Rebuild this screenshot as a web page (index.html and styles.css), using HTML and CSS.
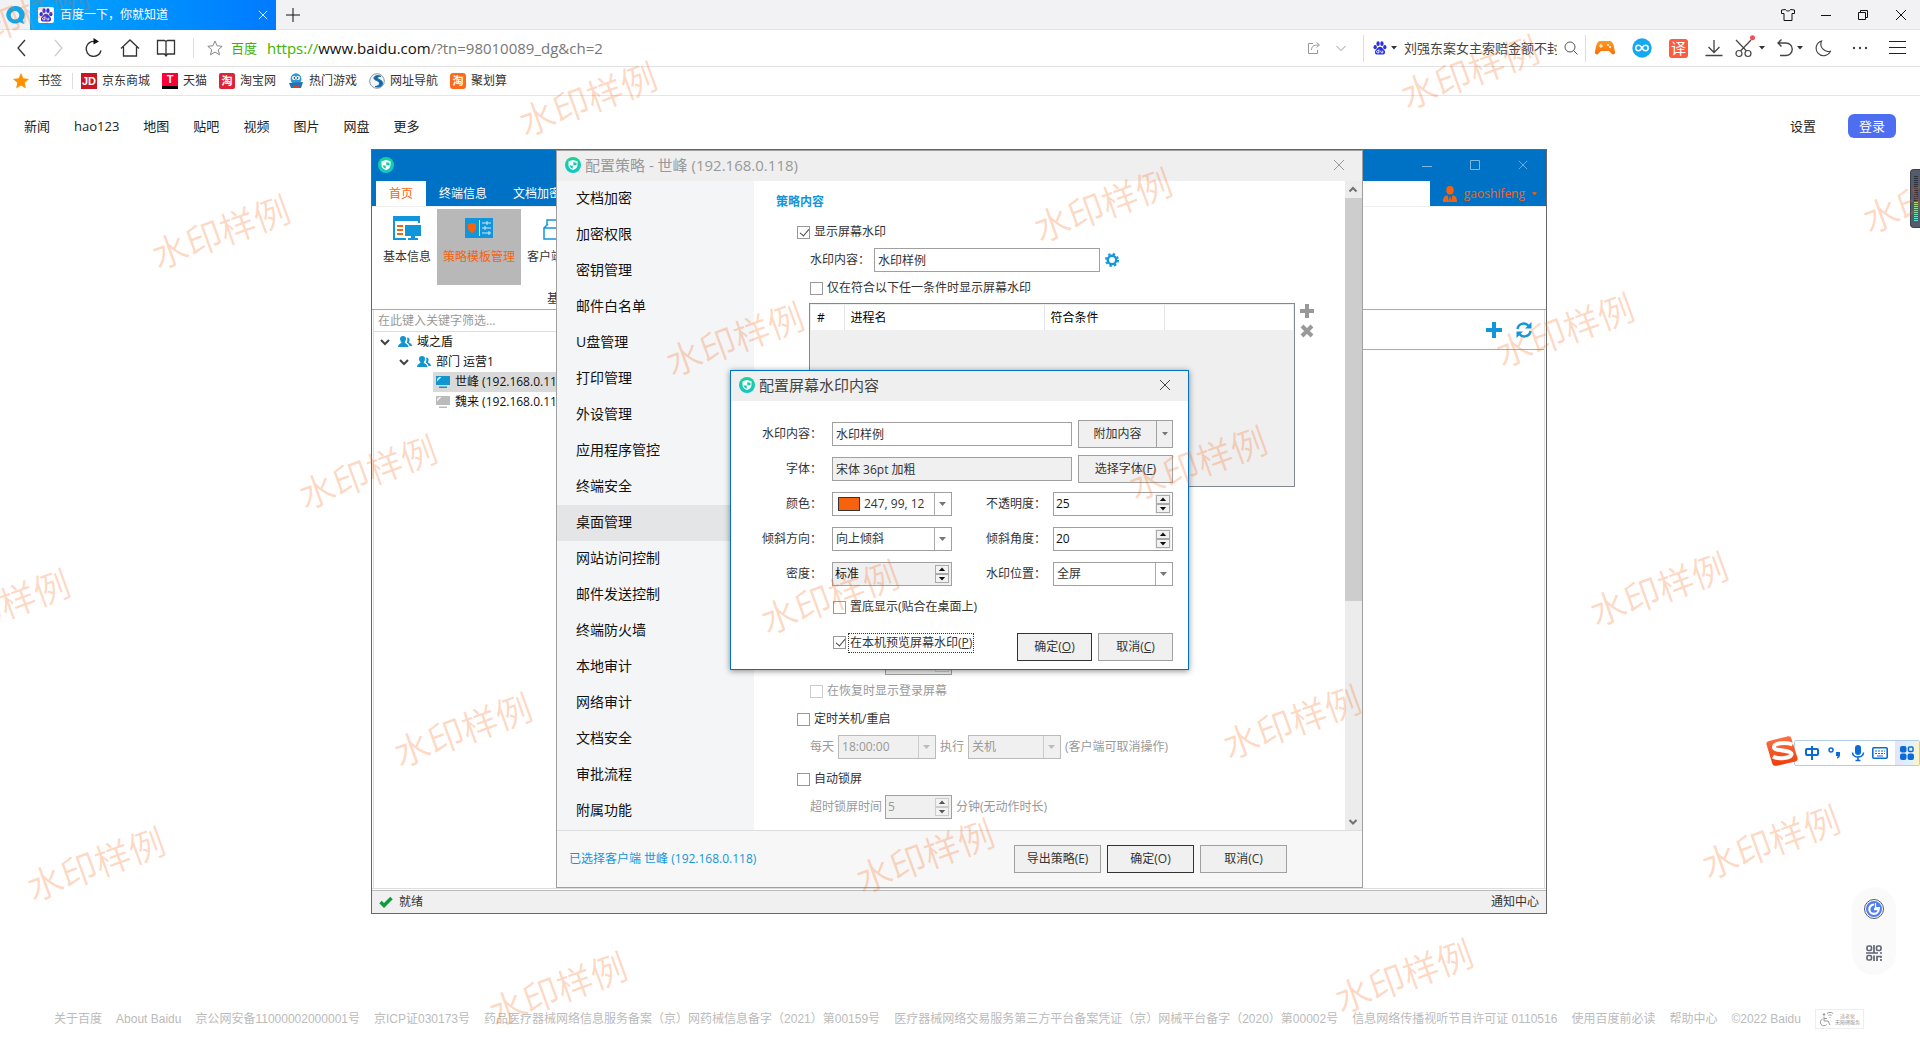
FILE: index.html
```html
<!DOCTYPE html>
<html lang="zh-CN">
<head>
<meta charset="utf-8">
<title>百度一下，你就知道</title>
<link rel="stylesheet" href="styles.css">
</head>
<body>
<svg class="sprite" aria-hidden="true">
  <defs>
    <linearGradient id="teal" x1="0" y1="0" x2="0" y2="1"><stop offset="0" stop-color="#14d48f"/><stop offset="1" stop-color="#14c5c9"/></linearGradient>
    <linearGradient id="orange" x1="0" y1="0" x2="0" y2="1"><stop offset="0" stop-color="#ff9a1f"/><stop offset="1" stop-color="#f5700c"/></linearGradient>
    <linearGradient id="sogou" x1="0" y1="0" x2="0" y2="1"><stop offset="0" stop-color="#ff7143"/><stop offset="1" stop-color="#ee3d0c"/></linearGradient>
  </defs>
  <symbol id="shield" viewBox="0 0 16 16"><circle cx="8" cy="8" r="8" fill="url(#teal)"/><path d="M8 3l4.500 1.300v3.700c0 2.500-2 4.200-4.500 5.200-2.500-1-4.500-2.700-4.500-5.200V4.300z" fill="#fff"/><path d="M8.300 5v3.200h3.200V6zM7.700 8.500H4.600c.3 1.500 1.500 2.500 3.100 3.300z" fill="#14cba6"/></symbol>
  <symbol id="paw" viewBox="0 0 16 16"><ellipse cx="2.500" cy="7" rx="1.900" ry="2.300"/><ellipse cx="5.800" cy="3" rx="1.900" ry="2.600"/><ellipse cx="10.200" cy="3" rx="1.900" ry="2.600"/><ellipse cx="13.500" cy="7" rx="1.900" ry="2.300"/><path d="M8 6.500c2.200 0 3 2 4.500 3.500 2.500 2.600 1 5.500-1.500 5.500H5c-2.500 0-4-2.900-1.500-5.500C5 8.500 5.800 6.500 8 6.500z"/><path d="M6.800 9.500v4H5.300a1.200 1.200 0 010-2.400h1.500M9 11v1.700c0 .6.400.8.900.8h1.300V11" fill="none" stroke="#fff" stroke-width="1"/></symbol>
  <symbol id="people" viewBox="0 0 14 14"><path d="M5 1a3 3 0 013 3c0 1.500-.8 2.700-1.300 3.200 0 1.300 3.800 1.600 3.800 4.800H0c0-3.200 3.500-3.500 3.500-4.800C2.900 6.700 2 5.500 2 4a3 3 0 013-3z"/><path d="M9 2.500c2 0 3 1.500 2.500 3.200L10.800 7.500C12.500 8 14 9 14 11h-2.500C11.300 9.500 10 8.500 8.700 7.800 9.500 6 9.600 4 9 2.500z"/></symbol>
  <symbol id="monitor" viewBox="0 0 14 13"><path d="M0 0h14v9H0zM3 10.500h8V12H3z"/><path d="M1 5.500L5.500 1H3L1 3z" fill="#fff" opacity=".8"/></symbol>
  <symbol id="close" viewBox="0 0 12 12"><path d="M1 1l10 10M11 1L1 11" fill="none" stroke="currentColor"/></symbol>
  <symbol id="chev" viewBox="0 0 10 10"><path d="M1 3l4 4 4-4" fill="none" stroke="currentColor" stroke-width="2"/></symbol>
  <symbol id="up" viewBox="0 0 14 9"><path d="M7 2L11 6.500H3z" fill="currentColor"/></symbol>
  <symbol id="down" viewBox="0 0 14 9"><path d="M7 7L3 2.500h8z" fill="currentColor"/></symbol>
  <symbol id="caret" viewBox="0 0 6 4"><path d="M0 0h6L3 3.500z" fill="currentColor"/></symbol>
</svg>

<header class="browser">
  <div class="tabstrip">
    <span class="brand"><svg width="20" height="20" viewBox="0 0 20 20"><path d="M10 1a9 8.800 0 105 16.300L19 19l-1.200-4A9 8.800 0 0010 1zm0 5a4.300 4.300 0 110 8.600A4.300 4.300 0 0110 6z" fill="#13a7ea" fill-rule="evenodd"/></svg></span>
    <div class="tab">
      <svg width="16" height="16" viewBox="0 0 16 16"><rect width="16" height="16" rx="2" fill="#fff"/><use href="#paw" x="1" y="1" width="14" height="14" fill="#2932e1"/></svg>
      <span class="tab-title">百度一下，你就知道</span>
      <button class="icon-btn" aria-label="关闭标签"><svg width="10" height="10"><use href="#close"/></svg></button>
    </div>
    <button class="icon-btn new-tab" aria-label="新标签"><svg width="14" height="14" viewBox="0 0 14 14"><path d="M7 0v14M0 7h14" stroke="#111" fill="none"/></svg></button>
    <div class="win-ctrls">
      <svg width="14" height="14" viewBox="0 0 14 14" fill="none" stroke="#111"><path d="M4.500 1.500L.5 2v3.500h2.500v7h8v-7h2.500V2l-4-.5c-.5 2-4.500 2-5 0z"/></svg>
      <svg width="10" height="14" viewBox="0 0 10 14"><path d="M0 7.500h10" stroke="#111"/></svg>
      <svg width="12" height="12" viewBox="0 0 12 12" fill="none" stroke="#111"><path d="M1.500 3.500h7v7h-7zM3.500 3.500v-2h7v7h-2"/></svg>
      <svg width="12" height="12" color="#111"><use href="#close"/></svg>
    </div>
  </div>

  <div class="addressbar">
    <div class="nav-icons">
      <svg width="20" height="20" viewBox="0 0 20 20"><path d="M13 2L6 10l7 8" stroke="#333" fill="none" stroke-width="1.300"/></svg>
      <svg width="20" height="20" viewBox="0 0 20 20"><path d="M7 2l7 8-7 8" stroke="#ccc" fill="none" stroke-width="1.300"/></svg>
      <svg width="20" height="20" viewBox="0 0 20 20"><path d="M11 3.500a7.500 7.500 0 106 9" stroke="#333" fill="none" stroke-width="1.400"/><path d="M9.500 0l5.500 3.500-5.500 3z" fill="#111"/></svg>
      <svg width="20" height="20" viewBox="0 0 20 20"><path d="M1 10.500L10 2l9 8.500M3.500 9v9h13V9" stroke="#333" fill="none" stroke-width="1.300"/></svg>
      <svg width="20" height="20" viewBox="0 0 20 20"><path d="M10 18V3.500L8.500 2.500h-7V16H8.500l1.500 2 1.500-2h7V2.500h-7L10 3.500" stroke="#333" fill="none" stroke-width="1.300"/></svg>
    </div>
    <div class="url">
      <svg width="16" height="16" viewBox="0 0 16 16"><path d="M8 1l2.100 4.800 5.100.5-3.900 3.400 1.200 5.100L8 12.100l-4.500 2.700 1.200-5.100L.8 6.300l5.100-.5z" stroke="#888" fill="none"/></svg>
      <span class="site">百度</span>
      <span class="address"><span class="scheme">https://</span><b>www.baidu.com</b>/?tn=98010089_dg&amp;ch=2</span>
    </div>
    <div class="url-tools">
      <svg width="14" height="14" viewBox="0 0 14 14" fill="none" stroke="#999"><path d="M6 2.500H1.500v10h9V9M4.500 9c0-3.500 2-5 7-5M9.500 1.500L12.500 4l-3 2.500"/></svg>
      <svg width="10" height="10" viewBox="0 0 10 10"><path d="M.5 3L5 7.500 9.500 3" stroke="#999" fill="none"/></svg>
    </div>
    <div class="quick-search">
      <svg width="14" height="16" viewBox="0 0 16 16" fill="#2932e1"><use href="#paw"/></svg>
      <svg class="dark" width="6" height="4"><use href="#caret"/></svg>
      <input class="quick-input" type="text" aria-label="搜索" value="刘强东案女主索赔金额不封顶">
      <svg width="14" height="14" viewBox="0 0 14 14" fill="none" stroke="#555"><circle cx="6" cy="6" r="5"/><path d="M9.500 9.500l4 4"/></svg>
    </div>
    <div class="tools">
      <svg width="20" height="14" viewBox="0 0 20 14"><path d="M5 0h10c3 0 4 5 5 11 .3 3-2.500 3-3.500 1.500L14 10H6l-2.500 2.500C2.500 14-.3 14 0 11 1 5 2 0 5 0z" fill="url(#orange)"/><path d="M6 3v4M4 5h4" stroke="#fff"/><circle cx="13" cy="4" r="1" fill="#fff"/><circle cx="15" cy="6" r="1" fill="#fff"/></svg>
      <svg width="20" height="20" viewBox="0 0 20 20"><circle cx="10" cy="10" r="9.700" fill="#13a9f2"/><path d="M10 10C8.500 7.500 7.500 7.300 6.500 7.300a2.700 2.700 0 000 5.400c1 0 2-.2 3.500-2.700s2.500-2.700 3.500-2.700a2.700 2.700 0 010 5.400c-1 0-2-.2-3.500-2.700z" fill="none" stroke="#fff" stroke-width="1.500"/></svg>
      <span class="badge-yi">译</span>
      <svg width="18" height="18" viewBox="0 0 18 18" fill="none" stroke="#444"><path d="M9 1v12M3.500 8L9 13.500 14.500 8M.5 16.500h17" stroke-width="1.300"/></svg>
      <span class="with-caret"><svg width="20" height="26" viewBox="0 0 20 26" fill="none" stroke="#444" stroke-width="1.200"><circle cx="4" cy="18.500" r="3"/><circle cx="13" cy="18.500" r="3"/><path d="M5.500 16L16 5M11.500 16L1 5"/><circle cx="17.500" cy="2.800" r="2.500" fill="#fa4b5b" stroke="none"/></svg><svg width="6" height="4"><use href="#caret"/></svg></span>
      <span class="with-caret"><svg width="16" height="18" viewBox="0 0 16 18" fill="none" stroke="#444" stroke-width="1.400"><path d="M4.500 .5L1 4l3.500 3.500M1 4H9a6 6 0 010 12.500H3"/></svg><svg width="6" height="4"><use href="#caret"/></svg></span>
      <svg width="16" height="18" viewBox="0 0 17 18"><path d="M7 1.500a8 8 0 009.500 11A8 8 0 117 1.500z" fill="none" stroke="#444" stroke-width="1.200"/></svg>
      <svg width="16" height="4" viewBox="0 0 16 4" fill="#444"><circle cx="2" cy="2" r="1.200"/><circle cx="8" cy="2" r="1.200"/><circle cx="14" cy="2" r="1.200"/></svg>
      <svg width="17" height="14" viewBox="0 0 17 14"><path d="M0 .5h17M0 6.500h17M0 12.500h17" stroke="#222"/></svg>
    </div>
  </div>

  <nav class="bookmarks">
    <a href="#" class="fav"><svg width="16" height="16" viewBox="0 0 16 16"><path d="M8 0l2.300 5.300 5.700.6-4.300 3.900 1.200 5.700L8 12.600l-4.900 2.900 1.200-5.700L0 5.900l5.700-.6z" fill="#ff9100"/></svg>书签</a>
    <a href="#"><span class="bm jd">JD</span>京东商城</a>
    <a href="#"><span class="bm tm">T</span>天猫</a>
    <a href="#"><span class="bm tb">淘</span>淘宝网</a>
    <a href="#"><svg width="16" height="16" viewBox="0 0 16 16"><ellipse cx="8" cy="6" rx="5.500" ry="5.800" fill="#2f9ad6"/><circle cx="6" cy="5" r="2" fill="#fff"/><circle cx="10" cy="5" r="2" fill="#fff"/><circle cx="6.400" cy="5" r=".8"/><circle cx="9.600" cy="5" r=".8"/><path d="M1 10l14-1-2 6H3z" fill="#2173b5"/><path d="M5 12h6v3H5z" fill="#c3472b"/></svg>热门游戏</a>
    <a href="#"><svg width="16" height="16" viewBox="0 0 16 16"><circle cx="8" cy="8" r="7.300" fill="#f3f6f8" stroke="#8798a5"/><path d="M12 3.500C9 1.500 4.500 3 5 5.500c.5 2 5 2 5.500 4.500.3 2-2 3.500-4.500 3.500 4 1.500 8-.5 7.500-4C13 6.500 9 7 8.500 5c-.2-1 1.500-1.800 3.500-1.500z" fill="#1667a8" stroke="#1667a8"/></svg>网址导航</a>
    <a href="#"><span class="bm jhs">淘</span>聚划算</a>
  </nav>
</header>

<main class="page">
  <nav class="topnav">
    <a href="#">新闻</a><a href="#">hao123</a><a href="#">地图</a><a href="#">贴吧</a><a href="#">视频</a><a href="#">图片</a><a href="#">网盘</a><a href="#">更多</a>
    <a href="#" class="settings">设置</a>
    <button class="login">登录</button>
  </nav>
  <footer class="footer">
    <a href="#">关于百度</a><a href="#">About Baidu</a><a href="#">京公网安备11000002000001号</a><a href="#">京ICP证030173号</a><a href="#">药品医疗器械网络信息服务备案（京）网药械信息备字（2021）第00159号</a><a href="#">医疗器械网络交易服务第三方平台备案凭证（京）网械平台备字（2020）第00002号</a><a href="#">信息网络传播视听节目许可证 0110516</a><a href="#">使用百度前必读</a><a href="#">帮助中心</a><span>©2022 Baidu</span>
    <a href="#" class="access"><svg width="15" height="15" viewBox="0 0 15 15" fill="none" stroke="#999"><circle cx="5" cy="2.500" r=".8" fill="#999"/><path d="M5 4.500V9h4l2 4M5 6.500h3M3.500 7a3.500 3.500 0 104 5.500M8 1.500c2-1.500 4-1.500 6 0M9.500 3.500c1-.8 2-.8 3 0M11 5v1"/></svg><span>适老化<br>无障碍服务</span></a>
  </footer>
</main>

<section class="app">
  <div class="app-title">
    <svg width="16" height="16"><use href="#shield"/></svg>
    <div class="app-ctrls">
      <svg width="10" height="10" viewBox="0 0 10 10"><path d="M0 6.500h10" stroke="currentColor"/></svg>
      <svg width="10" height="10" viewBox="0 0 10 10"><path d="M.5.5h9v9h-9z" stroke="currentColor" fill="none"/></svg>
      <svg width="10" height="10"><use href="#close"/></svg>
    </div>
  </div>
  <div class="app-tabs">
    <nav class="tabs"><a href="#" class="active">首页</a><a href="#">终端信息</a><a href="#">文档加密</a></nav>
    <button class="user"><svg width="14" height="16" viewBox="0 0 14 16" fill="#f7630c"><ellipse cx="7" cy="4.200" rx="3.700" ry="4.200"/><path d="M4.500 9.300L6 15.500l.5-5h1l.5 5 1.500-6.200c3 .5 4.500 2 4.500 6.700H0c0-4.700 1.500-6.200 4.500-6.700z"/></svg>gaoshifeng<svg width="5" height="4"><use href="#caret"/></svg></button>
  </div>
  <div class="ribbon">
    <div class="ribbon-items">
      <button><svg width="28" height="28" viewBox="0 0 28 28"><path d="M0 2h27v7h-2V7H2v17h11v2H0z" fill="#1296db"/><path d="M4 11h6v2H4zM4 15h6v2H4zM4 19h6v2H4z" fill="#f7630c"/><path d="M12 11h16v11h-6v2h3v2H15v-2h3v-2h-6z" fill="#1296db"/></svg>基本信息</button>
      <button class="on"><svg width="28" height="28" viewBox="0 0 28 28"><path d="M0 4h28v20H0z" fill="#1296db"/><path d="M7 9l4 1v4c0 2.500-1.800 4-4 5-2.200-1-4-2.500-4-5v-4z" fill="#f7630c"/><path d="M14.500 6v16M17 9h9M17 14h9M17 19h9M22 7v4M20 12v4M24 17v4" stroke="#cfe8f6"/></svg>策略模板管理</button>
      <button><svg width="28" height="28" viewBox="0 0 28 28" fill="none" stroke="#1296db" stroke-width="1.500"><path d="M1 14h24v11H1zM1 14l4-4M4 11V6h18v5"/></svg>客户端管理</button>
    </div>
    <span class="ribbon-group">基本功能</span>
  </div>
  <div class="workspace">
    <aside class="tree-panel">
      <input class="filter" type="text" placeholder="在此键入关键字筛选..." aria-label="筛选">
      <ul class="tree">
        <li class="lv1"><svg class="arrow" width="10" height="10"><use href="#chev"/></svg><svg width="14" height="14"><use href="#people"/></svg>域之盾</li>
        <li class="lv2"><svg class="arrow" width="10" height="10"><use href="#chev"/></svg><svg width="14" height="14"><use href="#people"/></svg>部门 运营1</li>
        <li class="lv3 selected"><svg width="14" height="13"><use href="#monitor"/></svg>世峰 (192.168.0.118)</li>
        <li class="lv3"><svg class="off" width="14" height="13"><use href="#monitor"/></svg>魏来 (192.168.0.117)</li>
      </ul>
    </aside>
    <div class="main-panel">
      <div class="panel-tools">
        <button class="icon-btn" aria-label="新增"><svg width="18" height="18" viewBox="0 0 18 18"><path d="M7 1h4v6h6v4h-6v6H7v-6H1V7h6z" fill="#1296db"/></svg></button>
        <button class="icon-btn" aria-label="刷新"><svg width="16" height="16" viewBox="0 0 16 16"><path d="M1.500 7a6.300 6.300 0 0111-3.300M14.500 9a6.300 6.300 0 01-11 3.300" fill="none" stroke="#1296db" stroke-width="2.400"/><path d="M15.500 0v6.500H9zM.5 16V9.500H7z" fill="#1296db"/></svg></button>
      </div>
    </div>
  </div>
  <div class="statusbar"><svg width="14" height="12" viewBox="0 0 14 12"><path d="M1.500 6L5 9.500 12.500 2" stroke="#0f9d3c" stroke-width="3.500" fill="none"/></svg>就绪<span class="notice">通知中心</span></div>

  <section class="policy">
    <div class="dlg-title muted"><svg width="16" height="16"><use href="#shield"/></svg>配置策略 - 世峰 (192.168.0.118)<button class="icon-btn" aria-label="关闭"><svg width="12" height="12"><use href="#close"/></svg></button></div>
    <div class="policy-body">
      <nav class="side">
        <a href="#">文档加密</a><a href="#">加密权限</a><a href="#">密钥管理</a><a href="#">邮件白名单</a><a href="#">U盘管理</a><a href="#">打印管理</a><a href="#">外设管理</a><a href="#">应用程序管控</a><a href="#">终端安全</a><a href="#" class="on">桌面管理</a><a href="#">网站访问控制</a><a href="#">邮件发送控制</a><a href="#">终端防火墙</a><a href="#">本地审计</a><a href="#">网络审计</a><a href="#">文档安全</a><a href="#">审批流程</a><a href="#">附属功能</a>
      </nav>
      <div class="content">
        <h2>策略内容</h2>
        <label class="check opt"><input type="checkbox" checked>显示屏幕水印</label>
        <div class="line sub"><label for="wm">水印内容：</label><input class="box wm-input" id="wm" type="text" value="水印样例"><svg width="14" height="14" viewBox="0 0 14 14" fill="none" stroke="#1296db"><circle cx="7" cy="7" r="4.200" stroke-width="2.400"/><circle cx="7" cy="7" r="6" stroke-width="2" stroke-dasharray="2.360"/></svg></div>
        <label class="check sub"><input type="checkbox">仅在符合以下任一条件时显示屏幕水印</label>
        <div class="list-row">
          <div class="list">
            <table><thead><tr><th class="c-no">#</th><th class="c-name">进程名</th><th class="c-cond">符合条件</th><th></th></tr></thead></table>
          </div>
          <div class="list-tools">
            <button class="icon-btn" aria-label="添加"><svg width="14" height="14" viewBox="0 0 14 14"><path d="M5 0h4v5h5v4H9v5H5V9H0V5h5z" fill="#999"/></svg></button>
            <button class="icon-btn" aria-label="删除"><svg width="14" height="14" viewBox="0 0 14 14"><path d="M2 2l10 10M12 2L2 12" stroke="#999" stroke-width="4"/></svg></button>
          </div>
        </div>
        <div class="lower">
          <div class="line sub dim"><span class="spin pushed"><input type="text" disabled aria-label="等待"><span class="arrows"><button disabled aria-label="增加"><svg><use href="#up"/></svg></button><button disabled aria-label="减少"><svg><use href="#down"/></svg></button></span></span></div>
          <label class="check sub dim"><input type="checkbox" disabled>在恢复时显示登录屏幕</label>
          <label class="check opt gap"><input type="checkbox">定时关机/重启</label>
          <div class="line sub dim"><label for="t">每天</label><select class="box s-time" id="t" disabled><option>18:00:00</option></select><label for="act">执行</label><select class="box s-act" id="act" disabled><option>关机</option></select><span>(客户端可取消操作)</span></div>
          <label class="check opt gap"><input type="checkbox">自动锁屏</label>
          <div class="line sub dim"><label for="lock" class="lock">超时锁屏时间</label><span class="spin"><input id="lock" type="text" value="5" disabled><span class="arrows"><button disabled aria-label="增加"><svg><use href="#up"/></svg></button><button disabled aria-label="减少"><svg><use href="#down"/></svg></button></span></span><span>分钟(无动作时长)</span></div>
        </div>
      </div>
      <div class="scroll"><svg width="16" height="17" viewBox="0 0 16 17"><path d="M4.500 10.500L8 7l3.500 3.500" stroke="#707070" stroke-width="2" fill="none"/></svg><span class="thumb"></span><svg width="16" height="17" viewBox="0 0 16 17"><path d="M4.500 7L8 10.500 11.500 7" stroke="#707070" stroke-width="2" fill="none"/></svg></div>
    </div>
    <div class="policy-foot"><span>已选择客户端 世峰 (192.168.0.118)</span><button class="btn">导出策略(E)</button><button class="btn primary">确定(O)</button><button class="btn">取消(C)</button></div>
  </section>

  <section class="modal">
    <div class="dlg-title"><svg width="16" height="16"><use href="#shield"/></svg>配置屏幕水印内容<button class="icon-btn" aria-label="关闭"><svg width="12" height="12"><use href="#close"/></svg></button></div>
    <form class="form">
      <div class="frow"><label for="f1">水印内容：</label><input class="box" id="f1" type="text" value="水印样例"><div class="split"><button type="button">附加内容</button><button type="button" class="drop" aria-label="更多"><svg width="6" height="4"><use href="#caret"/></svg></button></div></div>
      <div class="frow"><label for="f2">字体：</label><input class="box grey" id="f2" type="text" value="宋体 36pt 加粗" readonly><button type="button" class="btn wide">选择字体(<u>F</u>)</button></div>
      <div class="frow pair"><label for="f3">颜色：</label><span class="box color"><i></i><select id="f3"><option>247, 99, 12</option></select></span><label for="f4">不透明度：</label><span class="spin"><input id="f4" type="text" value="25"><span class="arrows"><button type="button" aria-label="增加"><svg><use href="#up"/></svg></button><button type="button" aria-label="减少"><svg><use href="#down"/></svg></button></span></span></div>
      <div class="frow pair"><label for="f5">倾斜方向：</label><select class="box" id="f5"><option>向上倾斜</option></select><label for="f6">倾斜角度：</label><span class="spin"><input id="f6" type="text" value="20"><span class="arrows"><button type="button" aria-label="增加"><svg><use href="#up"/></svg></button><button type="button" aria-label="减少"><svg><use href="#down"/></svg></button></span></span></div>
      <div class="frow pair"><label for="f7">密度：</label><span class="spin grey"><input id="f7" type="text" value="标准" readonly><span class="arrows"><button type="button" aria-label="增加"><svg><use href="#up"/></svg></button><button type="button" aria-label="减少"><svg><use href="#down"/></svg></button></span></span><label for="f8">水印位置：</label><select class="box" id="f8"><option>全屏</option></select></div>
      <label class="check big"><input type="checkbox">置底显示(贴合在桌面上)</label>
      <div class="actions"><label class="check big"><input type="checkbox" checked><span class="focus">在本机预览屏幕水印(<u>P</u>)</span></label><button type="button" class="btn primary">确定(<u>O</u>)</button><button type="button" class="btn">取消(<u>C</u>)</button></div>
    </form>
  </section>
</section>

<div class="recorder"><span></span></div>
<div class="ime">
  <svg class="ime-logo" width="32" height="30" viewBox="0 0 32 30"><path d="M3 5L22 .3c2-.4 3 .3 3.500 2.500L31.500 22c.5 2-.3 3-2 3.500L11 29.700c-3 .6-4.500-.5-5-3L.5 8.500C0 6.500 1 5.500 3 5z" fill="url(#sogou)"/><path d="M26.500 8.500C20 5.500 7.500 7 8 11.500c.5 4 17 2 17.500 6.500.3 4-13 6-18.500 2.500" fill="none" stroke="#fff" stroke-width="4"/></svg>
  <svg width="16" height="16" viewBox="0 0 16 16" fill="none" stroke="#0b6cd8" stroke-width="2"><rect x="2" y="4" width="12" height="6" rx="1"/><path d="M8 1v14"/></svg>
  <svg width="16" height="16" viewBox="0 0 16 16"><circle cx="4" cy="5" r="2" fill="none" stroke="#0b6cd8" stroke-width="1.500"/><path d="M9 7h4v3c0 2-1 3-3 3.500V12l1-1H9z" fill="#0b6cd8"/></svg>
  <svg width="14" height="17" viewBox="0 0 14 17"><rect x="4" y="0" width="6" height="10" rx="3" fill="#0b6cd8"/><path d="M1.500 7.500c0 6 11 6 11 0M7 12v4M4.500 15.500h5" stroke="#0b6cd8" stroke-width="1.600" fill="none"/></svg>
  <svg width="16" height="14" viewBox="0 0 16 14"><rect x=".8" y="1.800" width="14.400" height="10.400" rx="1" fill="none" stroke="#0b6cd8" stroke-width="1.600"/><path d="M3 5h10M3 7.500h10" stroke="#0b6cd8" stroke-dasharray="2 1"/><path d="M5 10h6" stroke="#0b6cd8"/></svg>
  <span class="ime-box"><svg width="14" height="14" viewBox="0 0 14 14" fill="#0b6cd8"><rect width="6.500" height="6.500" rx="2"/><rect y="7.500" width="6.500" height="6.500" rx="2"/><rect x="7.500" y="7.500" width="6.500" height="6.500" rx="2"/><rect x="8.500" y="1" width="4.500" height="4.500" rx="1" fill="none" stroke="#0b6cd8" stroke-width="1.500"/></svg></span>
</div>
<div class="float-pill">
  <svg width="20" height="20" viewBox="0 0 20 20"><circle cx="10" cy="10" r="9.500" fill="#fff" stroke="#555b6e"/><circle cx="10" cy="10" r="8" fill="#4e7df5"/><path d="M10 5.500a4.700 4.700 0 104.700 4.700H10" fill="none" stroke="#fff" stroke-width="2.200"/><path d="M11.500 4v4.500H16" fill="none" stroke="#fff" stroke-width="1.200"/></svg>
  <svg width="16" height="16" viewBox="0 0 16 16" fill="none" stroke="#626675" stroke-width="1.700"><rect x="1" y="1" width="4.500" height="4.500" rx="1.500"/><rect x="10.500" y="1" width="4.500" height="4.500" rx="1.500"/><rect x="1" y="10.500" width="4.500" height="4.500" rx="1.500"/><path d="M8 0v8M0 8h12M14 8h2M8 10.500V16M11 16v-4.500h4V13M15 14v2"/></svg>
</div>

<svg class="watermarks" aria-hidden="true">
  <text transform="translate(19 15) rotate(-20)">水印样例</text>
  <text transform="translate(587 97) rotate(-20)">水印样例</text>
  <text transform="translate(220 230) rotate(-20)">水印样例</text>
  <text transform="translate(1469 70) rotate(-20)">水印样例</text>
  <text transform="translate(1102 203) rotate(-20)">水印样例</text>
  <text transform="translate(734 337) rotate(-20)">水印样例</text>
  <text transform="translate(367 470) rotate(-20)">水印样例</text>
  <text transform="translate(0 604) rotate(-20)">水印样例</text>
  <text transform="translate(1931 194) rotate(-20)">水印样例</text>
  <text transform="translate(1564 328) rotate(-20)">水印样例</text>
  <text transform="translate(1197 461) rotate(-20)">水印样例</text>
  <text transform="translate(829 595) rotate(-20)">水印样例</text>
  <text transform="translate(462 728) rotate(-20)">水印样例</text>
  <text transform="translate(95 862) rotate(-20)">水印样例</text>
  <text transform="translate(1658 587) rotate(-20)">水印样例</text>
  <text transform="translate(1291 720) rotate(-20)">水印样例</text>
  <text transform="translate(924 854) rotate(-20)">水印样例</text>
  <text transform="translate(557 987) rotate(-20)">水印样例</text>
  <text transform="translate(1770 840) rotate(-20)">水印样例</text>
  <text transform="translate(1403 974) rotate(-20)">水印样例</text>
</svg>
</body>
</html>
```
FILE: styles.css
```css
* { box-sizing: border-box; }
html, body { margin: 0; }
body {
  position: relative;
  min-height: 100vh;
  display: flex;
  flex-direction: column;
  overflow: hidden;
  background: #fff;
  color: #333;
  font: 12px/16px "Open Sans", "Noto Sans CJK SC", sans-serif;
}
a { color: inherit; text-decoration: none; }
button, input, select { font: inherit; color: inherit; margin: 0; padding: 0; border: 0; border-radius: 0; background: none; outline: 0; }
select { appearance: none; }
svg { display: block; flex: none; }
.sprite { position: absolute; width: 0; height: 0; }
.icon-btn { display: flex; align-items: center; justify-content: center; }

/* browser chrome */
.tabstrip { display: flex; align-items: center; height: 30px; background: #f2f2f4; border-bottom: 1px solid #e3e3e5; }
.brand { width: 30px; padding-left: 5px; }
.tab { display: flex; align-items: center; gap: 6px; width: 246px; height: 30px; padding: 0 8px; color: #fff; background: linear-gradient(90deg, #00a8ff, #007aff); }
.tab-title { flex: 1; }
.new-tab { margin-left: 10px; }
.win-ctrls { display: flex; align-items: center; gap: 26px; margin-left: auto; padding-right: 13px; }

.addressbar { display: flex; align-items: center; height: 37px; border-bottom: 1px solid #e2e2e2; }
.nav-icons { display: flex; gap: 16px; width: 194px; padding-left: 12px; border-right: 1px solid #ddd; }
.url { flex: 1; display: flex; align-items: center; gap: 8px; padding-left: 13px; font-size: 13px; }
.site, .scheme { color: #3bb300; }
.address { padding-left: 2px; color: #777; font-size: 15px; line-height: 20px; }
.address b { font-weight: 400; color: #111; }
.url-tools { display: flex; align-items: center; gap: 15px; padding-right: 17px; border-right: 1px solid #ddd; height: 27px; }
.quick-search { display: flex; align-items: center; gap: 7px; width: 222px; height: 27px; padding-left: 9px; border-right: 1px solid #ddd; font-size: 13px; color: #444; }
.quick-search .dark { color: #333; margin-left: -3px; }
.quick-input { width: 153px; }
.tools { display: flex; align-items: center; gap: 12px; padding: 0 14px 0 9px; color: #333; }
.tools > :nth-child(-n+3) { margin-right: 5px; }
.tools > :nth-last-child(-n+2) { margin-left: 9px; }
.with-caret { display: flex; align-items: center; gap: 4px; }
.badge-yi { width: 19px; height: 19px; border-radius: 3px; background: #ff5b3f; color: #fff; font-size: 15px; line-height: 19px; text-align: center; }

.bookmarks { display: flex; align-items: center; gap: 12px; height: 29px; padding-left: 13px; border-bottom: 1px solid #e6e6e6; }
.bookmarks a { display: flex; align-items: center; gap: 5px; }
.bookmarks .fav { gap: 9px; padding-right: 10px; margin-right: -4px; border-right: 1px solid #ddd; }
.bm { width: 16px; height: 16px; color: #fff; text-align: center; font: bold 11px/16px "Liberation Sans", "Noto Sans CJK SC", sans-serif; }
.jd { background: #c81623; }
.tm { background: #ff0036; border-bottom: 3px solid #000; line-height: 13px; }
.tb { background: #dd2434; border-radius: 2px; }
.jhs { background: #ff6a1a; border-radius: 3px; }

/* page */
.page { flex: 1; display: flex; flex-direction: column; font-family: "Liberation Sans", "Noto Sans CJK SC", sans-serif; }
.topnav { display: flex; align-items: center; gap: 24px; padding: 18px 24px; font-family: "Open Sans", "Noto Sans CJK SC", sans-serif; font-size: 13px; line-height: 24px; color: #222; }
.settings { margin-left: auto; }
.login { width: 48px; height: 24px; margin-left: 8px; border-radius: 6px; background: #4e6ef2; color: #fff; }
.footer { display: flex; align-items: center; justify-content: center; gap: 14px; margin-top: auto; padding: 0 54px 11px 52px; color: #bbb; white-space: nowrap; }
.access { display: flex; align-items: center; justify-content: center; width: 49px; height: 20px; gap: 1px; border: 1px solid #eee; font-size: 5px; line-height: 6px; text-align: center; color: #999; }

/* management console */
.app { position: absolute; top: 149px; left: 371px; right: 373px; border: 1px solid #666; background: #fff; }
.app-title { display: flex; align-items: center; justify-content: space-between; height: 31px; padding: 0 18px 2px 6px; background: #0072c6; }
.app-ctrls { display: flex; gap: 38px; color: #7fb8e2; }
.app-tabs { display: flex; justify-content: space-between; height: 26px; border-bottom: 1px solid #eee; }
.tabs { display: flex; width: 480px; padding-left: 4px; background: #0072c6; color: #fff; }
.tabs a { padding: 0 13px; line-height: 26px; }
.tabs .active { background: #fff; color: #f7630c; }
.user { display: flex; align-items: center; gap: 7px; padding: 0 9px 0 13px; background: #0072c6; color: #f7630c; }
.ribbon { height: 103px; padding: 2px 5px; border-bottom: 1px solid #aaa; }
.ribbon-items { display: flex; margin-bottom: 6px; }
.ribbon-items button { display: flex; flex-direction: column; align-items: center; gap: 7px; height: 76px; padding: 5px 6px; }
.ribbon-items .on { background: #b8b8b8; color: #f7630c; }
.ribbon-group { padding-left: 170px; }
.workspace { display: flex; min-height: 579px; padding-left: 1px; border-bottom: 1px solid #ddd; }
.tree-panel { width: 300px; border-left: 1px solid #ddd; }
.filter { width: 100%; height: 22px; padding-left: 4px; border-bottom: 1px solid #ddd; }
.filter::placeholder { color: #999; }
.tree { margin: 0; padding: 0; list-style: none; color: #111; }
.tree li { display: flex; align-items: center; gap: 5px; height: 20px; fill: #1296cf; white-space: nowrap; }
.tree .arrow { color: #444; margin-right: 3px; }
.lv1 { padding-left: 6px; }
.lv2 { padding-left: 25px; }
.tree .lv3 { margin-left: 59px; padding-left: 3px; }
.selected { background: #d9d9d9; }
.tree .off { fill: #bbb; }
.main-panel { flex: 1; margin-right: 1px; border-right: 1px solid #ddd; }
.panel-tools { display: flex; align-items: center; justify-content: flex-end; gap: 13px; height: 40px; padding-right: 12px; border-bottom: 1px solid #aaa; }
.statusbar { display: flex; align-items: center; gap: 6px; height: 23px; margin-top: 1px; padding: 0 7px; background: #f0f0f0; border-top: 1px solid #bbb; }
.notice { margin-left: auto; }

/* dialogs */
.dlg-title { display: flex; align-items: center; gap: 4px; height: 30px; padding: 0 17px 2px 8px; background: #efefef; font-size: 15px; line-height: 20px; color: #444; }
.dlg-title .icon-btn { margin-left: auto; }
.dlg-title.muted { color: #999; }
.policy { position: absolute; top: 0; left: 184px; right: 183px; border: 1px solid #a0a0a0; background: #fff; }
.policy-body { display: flex; }
.side { display: flex; flex-direction: column; width: 197px; padding-bottom: 1px; background: #f4f5f7; font-size: 14px; color: #111; }
.side a { height: 36px; padding-left: 19px; line-height: 34px; }
.side .on { background: #e4e5e6; }
.content { flex: 1; display: flex; flex-direction: column; padding: 13px 31px 11px 22px; }
.content h2 { margin: 0 0 14px; font-size: 12px; line-height: 16px; color: #1296db; }
.opt { margin: 0 0 8px 21px; }
.sub { margin: 0 0 8px 34px; }
.check { display: flex; align-items: center; gap: 4px; height: 16px; }
.check input { appearance: none; flex: none; width: 13px; height: 13px; border: 1px solid #999; background: #fff; }
.check input:checked::before { content: ""; display: block; width: 4px; height: 8px; margin: 0 0 0 4px; border: solid #444; border-width: 0 1px 1px 0; transform: rotate(40deg); }
.dim { color: #999; }
.dim input:disabled, .dim select:disabled { border-color: #bbb; opacity: 1; color: #999; }
.check.dim input { border-color: #ccc; }
.line { display: flex; align-items: center; gap: 4px; height: 24px; }
.box { height: 24px; padding: 0 3px; border: 1px solid #a0a0a0; background: #fff; }
.wm-input { width: 226px; margin-right: 1px; }
select { padding: 0 3px; background: #fff url("data:image/svg+xml,%3Csvg xmlns='http://www.w3.org/2000/svg' width='17' height='24'%3E%3Cpath d='M.5 0v24' stroke='%23aaa'/%3E%3Cpath d='M5 10h7l-3.500 4z' fill='%23777'/%3E%3C/svg%3E") right center no-repeat; }
select.box { background: #fff url("data:image/svg+xml,%3Csvg xmlns='http://www.w3.org/2000/svg' width='17' height='24'%3E%3Cpath d='M.5 0v24' stroke='%23aaa'/%3E%3Cpath d='M5 10h7l-3.500 4z' fill='%23777'/%3E%3C/svg%3E") right center no-repeat; }
select.box:disabled { background: #f0f0f0 url("data:image/svg+xml,%3Csvg xmlns='http://www.w3.org/2000/svg' width='17' height='24'%3E%3Cpath d='M.5 0v24' stroke='%23ccc'/%3E%3Cpath d='M5 10h7l-3.500 4z' fill='%23bbb'/%3E%3C/svg%3E") right center no-repeat; }
.s-time { width: 98px; }
.s-act { width: 93px; }
.list-row { display: flex; gap: 5px; margin: -1px 0 0 33px; }
.list { flex: 1; height: 184px; padding: 1px; border: 1px solid #828790; background: #efefef; }
.list table { width: 100%; border-collapse: collapse; background: #fff; color: #000; table-layout: fixed; }
.list th { height: 25px; padding: 0 6px; border-right: 1px solid #e5e5e5; font-weight: 400; text-align: left; }
.list th:last-child { border: 0; }
.c-no { width: 33px; }
.c-name { width: 200px; }
.c-cond { width: 120px; }
.list-tools { display: flex; flex-direction: column; gap: 6px; padding-top: 1px; }
.lower { margin-top: auto; }
.lower .sub:last-child { margin-bottom: 0; }
.lower .gap { margin-top: 12px; }
.pushed { margin-left: 75px; }
.lock { width: 71px; white-space: nowrap; }
.spin { display: flex; width: 67px; height: 24px; padding: 1px; border: 1px solid #a0a0a0; background: #fff; }
.spin input { flex: 1; width: 0; min-width: 0; padding: 0 1px; align-self: flex-start; height: 18px; color: #111; }
.arrows { display: flex; flex-direction: column; padding: 1px; background: #f0f0f0; }
.arrows button { display: block; width: 14px; height: 9px; border: 1px solid #aaa; color: #111; background: #f2f2f2; }
.arrows svg { width: 12px; height: 7px; }
.dim .spin, .grey { background: #f0f0f0; }
.dim .arrows button { border-color: #ccc; color: #555; }
.scroll { display: flex; flex-direction: column; width: 17px; background: #ececec; }
.thumb { height: 403px; margin-bottom: auto; background: #cdcdcd; }
.policy-foot { display: flex; align-items: center; gap: 6px; height: 57px; padding: 0 75px 0 12px; border-top: 1px solid #ddd; background: #f7f7f7; }
.policy-foot span { margin-right: auto; color: #1296db; }
.btn { width: 87px; height: 28px; border: 1px solid #a0a0a0; background: #f0f0f0; text-align: center; }
.btn.primary { border-color: #333; }

.modal { position: absolute; top: 220px; left: 358px; width: 459px; border: 1px solid #0072c6; background: #fff; box-shadow: 0 1px 6px rgba(0, 0, 0, .45); }
.form { display: flex; flex-direction: column; gap: 7px; padding: 19px 15px 8px 28px; }
.frow { display: grid; grid-template-columns: 67px 240px 95px; column-gap: 6px; align-items: center; height: 28px; }
.frow.pair { grid-template-columns: 73px 120px 101px 120px; column-gap: 0; }
.frow label { width: 63px; text-align: right; white-space: nowrap; }
.frow.pair label:nth-of-type(2) { width: 94px; }
.frow.pair .spin { width: 120px; }
.split { display: flex; height: 28px; border: 1px solid #a0a0a0; background: #f0f0f0; }
.split button { flex: 1; }
.split .drop { flex: none; display: flex; align-items: center; justify-content: center; width: 16px; border-left: 1px solid #a0a0a0; color: #777; }
.wide { width: 95px; }
.color { display: flex; align-items: center; gap: 1px; padding: 0 0 0 5px; }
.color i { flex: none; width: 22px; height: 14px; border: 1px solid #333; background: #f7630c; }
.color select { flex: 1; height: 22px; }
.big { padding-left: 74px; }
.form > .big { height: 20px; margin-top: 2px; }
.actions { display: flex; align-items: center; gap: 6px; height: 37px; }
.actions .check { gap: 2px; margin-right: auto; }
.actions .btn { width: 75px; align-self: flex-end; }
.focus { padding: 1px; border: 1px dotted #333; white-space: nowrap; }

/* floating widgets */
.recorder { position: absolute; right: 0; top: 169px; width: 10px; height: 59px; padding: 6px 2px 6px 3px; border: 1px solid #3c4150; border-right: 0; border-radius: 4px 0 0 4px; background: #555b6a; }
.recorder span { display: block; height: 46px; background: repeating-linear-gradient(transparent 0 1px, #555b6a 1px 2px), linear-gradient(#2c303b 55%, #b4e87a 56%, #7ee0a0 75%, #55e8e0); }
.ime { position: absolute; right: 0; top: 740px; display: flex; align-items: center; justify-content: space-between; width: 126px; height: 26px; padding-left: 9px; border: 1px solid #b3cdea; border-radius: 2px; background: #fff; }
.ime-logo { position: absolute; left: -29px; top: -5px; }
.ime-box { display: flex; align-items: center; justify-content: center; width: 24px; height: 24px; background: linear-gradient(90deg, #e3e4fb, #dff1ff 60%, #fdf3c4); }
.float-pill { position: absolute; right: 24px; bottom: 65px; display: flex; flex-direction: column; align-items: center; justify-content: space-between; width: 44px; height: 88px; padding: 12px 0 14px; border-radius: 22px; background: #fafafa; }
.watermarks { position: absolute; inset: 0; width: 100%; height: 100%; pointer-events: none; fill: #f7630c; fill-opacity: .25; text-anchor: middle; dominant-baseline: central; font: 350 36px/36px "Noto Sans CJK SC", sans-serif; }
```
